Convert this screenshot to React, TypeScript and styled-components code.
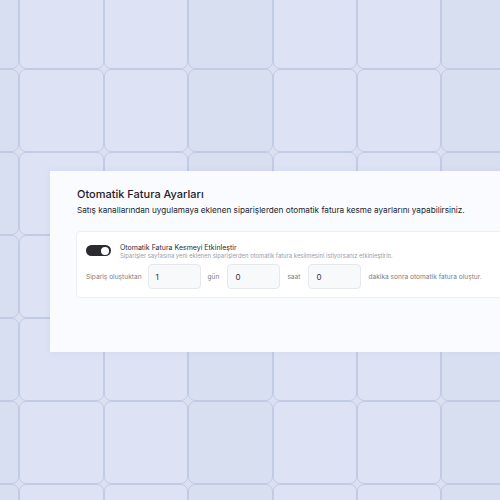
import styled, { createGlobalStyle } from 'styled-components';

const GlobalStyle = createGlobalStyle`
  html, body {
    margin: 0;
    padding: 0;
    width: 500px;
    height: 500px;
    overflow: hidden;
    background: #dbe1f3;
    font-family: Inter, 'Noto Sans', sans-serif;
  }
`;

// ----------------------------------------------------------------------

const Page = styled.div`
  position: relative;
  width: 500px;
  height: 500px;
  overflow: hidden;
`;

const Backdrop = styled.div`
  position: absolute;
  left: -65px;
  top: -14px;
  display: grid;
  grid-template-columns: repeat(8, 84.4px);
  grid-auto-rows: 83px;
`;

const Tile = styled.div<{ shade: number }>`
  box-sizing: border-box;
  border: 1px solid #c2cbe5;
  border-radius: 7px;
  background: ${({ shade }) => (shade ? '#d8dff1' : '#dde3f5')};
`;

const Panel = styled.section`
  position: relative;
  box-sizing: border-box;
  margin: 171px 0 0 50px;
  width: 470px;
  height: 181px;
  padding: 16px 0 0 27px;
  background: #fafbfe;
  box-shadow: 0 0 6px rgba(120, 135, 180, 0.12);
`;

const Title = styled.h2`
  margin: 0;
  font-size: 11px;
  line-height: 15px;
  font-weight: 500;
  color: #1f2128;
`;

const Subtitle = styled.p`
  margin: 3px 0 0;
  font-size: 8.2px;
  line-height: 11px;
  font-weight: 400;
  color: #22252c;
`;

const SettingBox = styled.div`
  box-sizing: border-box;
  margin: 15px 0 0 -1px;
  width: 460px;
  height: 67px;
  padding: 11px 0 0 9px;
  border: 1px solid #eceef2;
  border-radius: 4px;
  background: #ffffff;
`;

const ToggleRow = styled.div`
  display: flex;
  align-items: flex-start;
  gap: 9px;
`;

const Switch = styled.div<{ on: boolean }>`
  position: relative;
  margin-top: 2px;
  width: 25px;
  height: 11px;
  border-radius: 6px;
  background: ${({ on }) => (on ? '#2a2b2e' : '#cfd3da')};

  &::after {
    content: '';
    position: absolute;
    top: 1.5px;
    left: ${({ on }) => (on ? '15px' : '1.5px')};
    width: 8px;
    height: 8px;
    border-radius: 50%;
    background: #ffffff;
  }
`;

const ToggleText = styled.div`
  display: flex;
  flex-direction: column;
`;

const ToggleLabel = styled.span`
  font-size: 7px;
  line-height: 9px;
  color: #2a2c33;
`;

const ToggleHint = styled.span`
  font-size: 5.9px;
  line-height: 7px;
  color: #9a9ea8;
`;

const DelayRow = styled.div`
  display: flex;
  align-items: center;
  margin-top: 5px;
`;

const RowText = styled.span<{ gap: number }>`
  margin-right: ${({ gap }) => gap}px;
  font-size: 6.6px;
  color: #7a7e88;
`;

const NumberBox = styled.div`
  box-sizing: border-box;
  display: flex;
  align-items: center;
  width: 53px;
  height: 25px;
  margin-right: 7px;
  padding-left: 7px;
  border: 1px solid #e6e8ec;
  border-radius: 4px;
  background: #f8f9fb;
  font-size: 8px;
  color: #30333a;
`;

// ----------------------------------------------------------------------

const tiles = Array.from({ length: 8 * 8 }, (_, i) => ((i * 7 + Math.floor(i / 8)) % 3 === 0 ? 1 : 0));

export default function App() {
  return (
    <Page>
      <GlobalStyle />
      <Backdrop>
        {tiles.map((shade, i) => (
          <Tile key={i} shade={shade} />
        ))}
      </Backdrop>
      <Panel>
        <Title>Otomatik Fatura Ayarları</Title>
        <Subtitle>
          Satış kanallarından uygulamaya eklenen siparişlerden otomatik fatura kesme ayarlarını yapabilirsiniz.
        </Subtitle>
        <SettingBox>
          <ToggleRow>
            <Switch on />
            <ToggleText>
              <ToggleLabel>Otomatik Fatura Kesmeyi Etkinleştir</ToggleLabel>
              <ToggleHint>
                Siparişler sayfasına yeni eklenen siparişlerden otomatik fatura kesilmesini istiyorsanız etkinleştirin.
              </ToggleHint>
            </ToggleText>
          </ToggleRow>
          <DelayRow>
            <RowText gap={6}>Sipariş oluştuktan</RowText>
            <NumberBox>1</NumberBox>
            <RowText gap={8}>gün</RowText>
            <NumberBox>0</NumberBox>
            <RowText gap={8}>saat</RowText>
            <NumberBox>0</NumberBox>
            <RowText gap={0}>dakika sonra otomatik fatura oluştur.</RowText>
          </DelayRow>
        </SettingBox>
      </Panel>
    </Page>
  );
}
